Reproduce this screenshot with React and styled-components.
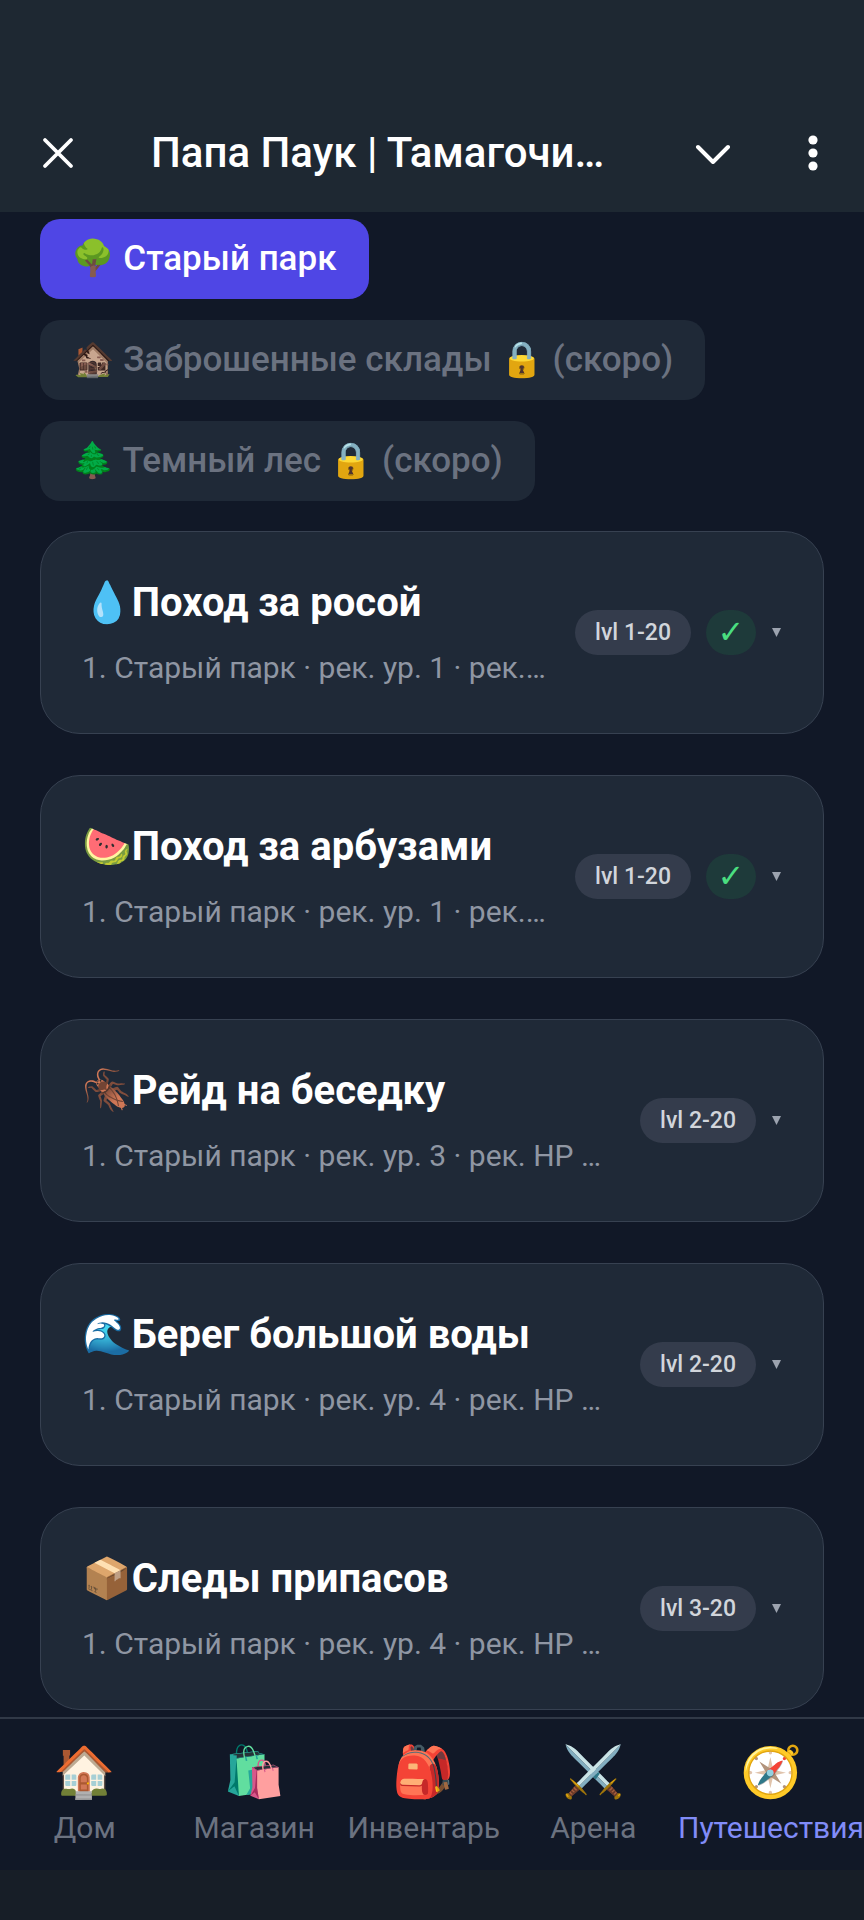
import React, { useState } from "react";
import styled, { createGlobalStyle } from "styled-components";

const GlobalStyle = createGlobalStyle`
  *, *::before, *::after { box-sizing: border-box; }
  body {
    margin: 0;
    background: #111827;
    font-family: Roboto, "Noto Color Emoji", "DejaVu Sans", sans-serif;
    color: #ffffff;
  }
  button { font: inherit; color: inherit; border: 0; background: none; padding: 0; }
  h1, h2, p, ul { margin: 0; padding: 0; }
`;

const Screen = styled.div`
  display: flex;
  flex-direction: column;
  min-height: 100vh;
`;

const Header = styled.header`
  display: flex;
  align-items: center;
  padding: 94px 26px 0 31px;
  background: #1e2832;
`;

const IconButton = styled.button`
  display: flex;
  align-items: center;
  justify-content: center;
  flex: none;
  width: ${(p) => p.$width}px;
  height: 118px;
`;

const Title = styled.h1`
  flex: 1;
  min-width: 0;
  padding-left: 66px;
  font-size: 42px;
  font-weight: 500;
  line-height: 60px;
  white-space: nowrap;
`;

const HeaderActions = styled.div`
  display: flex;
  gap: 50px;
`;

const Content = styled.main`
  flex: 1;
  padding: 7px 40px;
`;

const Chips = styled.div`
  display: flex;
  flex-wrap: wrap;
  gap: 21px;
  margin-bottom: 30px;
`;

const Chip = styled.button`
  height: 80px;
  padding: 0 32px 0 31px;
  border-radius: 20px;
  font-size: 35px;
  font-weight: 500;
  line-height: 48px;
  white-space: nowrap;
  background: ${(p) => (p.$active ? "#4f46e5" : "#1f2937")};
  color: ${(p) => (p.$active ? "#ffffff" : "#6b7280")};
`;

const List = styled.ul`
  display: flex;
  flex-direction: column;
  gap: 41px;
  list-style: none;
`;

const Card = styled.button`
  display: flex;
  align-items: center;
  width: 100%;
  padding: 41px;
  border: 1px solid #374151;
  border-radius: 40px;
  background: #1f2937;
  text-align: left;
`;

const CardText = styled.span`
  flex: 1;
  min-width: 0;
`;

const CardTitle = styled.span`
  display: block;
  font-size: 40px;
  font-weight: 700;
  line-height: 60px;
  height: 60px;
  white-space: nowrap;
`;

const CardSub = styled.span`
  display: block;
  margin-top: 11px;
  font-size: 30px;
  line-height: 48px;
  color: #8f96a3;
  white-space: nowrap;
`;

const CardMeta = styled.span`
  display: flex;
  align-items: center;
  gap: 15px;
  margin-left: 20px;
`;

const Pill = styled.span`
  display: flex;
  align-items: center;
  height: 45px;
  padding: 0 20px;
  border-radius: 23px;
  font-size: 23px;
  font-weight: 500;
  line-height: 45px;
  white-space: nowrap;
  background: #343c4c;
  color: #d1d5db;
`;

const DonePill = styled(Pill)`
  justify-content: center;
  width: 50px;
  padding: 0;
  font-size: 32px;
  background: #1e3a3a;
  color: #4ade80;
`;

const Nav = styled.nav`
  display: flex;
  height: 153px;
  border-top: 2px solid #313947;
  background: #111827;
`;

const Tab = styled.button`
  display: flex;
  flex: 1;
  flex-direction: column;
  align-items: center;
  padding-top: 21px;
  font-size: 30px;
  line-height: 45px;
  color: ${(p) => (p.$active ? "#818cf8" : "#6b7280")};
`;

const TabIcon = styled.span`
  height: 65px;
  font-size: 50px;
  line-height: 65px;
`;

const SystemBar = styled.footer`
  height: 50px;
  background: #171e27;
`;

const areas = [
  { label: "🌳 Старый парк" },
  { label: "🏚️ Заброшенные склады 🔒 (скоро)", locked: true },
  { label: "🌲 Темный лес 🔒 (скоро)", locked: true },
];

const quests = [
  { icon: "💧", name: "Поход за росой", info: "рек. ур. 1 · рек.…", range: "1-20", done: true },
  { icon: "🍉", name: "Поход за арбузами", info: "рек. ур. 1 · рек.…", range: "1-20", done: true },
  { icon: "🪳", name: "Рейд на беседку", info: "рек. ур. 3 · рек. HP …", range: "2-20" },
  { icon: "🌊", name: "Берег большой воды", info: "рек. ур. 4 · рек. HP …", range: "2-20" },
  { icon: "📦", name: "Следы припасов", info: "рек. ур. 4 · рек. HP …", range: "3-20" },
];

const tabs = [
  ["🏠", "Дом"],
  ["🛍️", "Магазин"],
  ["🎒", "Инвентарь"],
  ["⚔️", "Арена"],
  ["🧭", "Путешествия"],
];

export default function App() {
  const [tab, setTab] = useState("Путешествия");
  return (
    <Screen>
      <GlobalStyle />
      <Header>
        <IconButton $width={54} aria-label="Закрыть">
          <svg width="32" height="32" viewBox="0 0 32 32" stroke="#fff" strokeWidth="3.8" strokeLinecap="round">
            <path d="M3 3l26 26M29 3l-26 26" />
          </svg>
        </IconButton>
        <Title>Папа Паук | Тамагочи…</Title>
        <HeaderActions>
          <IconButton $width={50} aria-label="Свернуть">
            <svg width="36" height="22" viewBox="0 0 36 22" fill="none" stroke="#fff" strokeWidth="4" strokeLinecap="round" strokeLinejoin="round">
              <path d="M3 5l15 15 15-15" />
            </svg>
          </IconButton>
          <IconButton $width={50} aria-label="Меню">
            <svg width="10" height="36" viewBox="0 0 10 36" fill="#fff">
              <circle cx="5" cy="5" r="4.600" />
              <circle cx="5" cy="18" r="4.600" />
              <circle cx="5" cy="31" r="4.600" />
            </svg>
          </IconButton>
        </HeaderActions>
      </Header>
      <Content>
        <Chips>
          {areas.map((a) => (
            <Chip key={a.label} $active={!a.locked} disabled={a.locked}>
              {a.label}
            </Chip>
          ))}
        </Chips>
        <List>
          {quests.map((q) => (
            <li key={q.name}>
              <Card>
                <CardText>
                  <CardTitle>{q.icon}{q.name}</CardTitle>
                  <CardSub>1. Старый парк · {q.info}</CardSub>
                </CardText>
                <CardMeta>
                  <Pill>lvl {q.range}</Pill>
                  {q.done && <DonePill>✓</DonePill>}
                  <svg width="11" height="11" viewBox="0 0 11 11" fill="#9ca3af">
                    <path d="M1 1h9l-4.500 9z" />
                  </svg>
                </CardMeta>
              </Card>
            </li>
          ))}
        </List>
      </Content>
      <Nav>
        {tabs.map(([icon, label]) => (
          <Tab key={label} $active={label === tab} onClick={() => setTab(label)}>
            <TabIcon>{icon}</TabIcon>
            {label}
          </Tab>
        ))}
      </Nav>
      <SystemBar />
    </Screen>
  );
}
